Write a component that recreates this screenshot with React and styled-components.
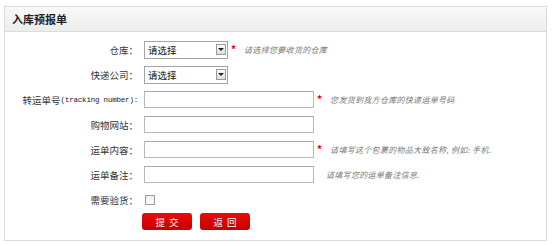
import styled, { createGlobalStyle } from 'styled-components'

const GlobalStyle = createGlobalStyle`
  body {
    margin: 0;
    background: #ffffff;
    font-family: "Noto Sans CJK SC", "Liberation Sans", sans-serif;
    color: #333333;
  }
`

const Panel = styled.div`
  margin: 6px 5px 0 4px;
  width: 543px;
  height: 235px;
  border: 1px solid #dcdcdc;
  box-sizing: border-box;
  background: #ffffff;
`
const PanelHeader = styled.div`
  height: 24px;
  display: flex;
  align-items: center;
  padding-left: 7px;
  background: linear-gradient(#f9f9f9, #ececec);
  border-bottom: 1px solid #dcdcdc;
  font-size: 11px;
  font-weight: bold;
  color: #222222;
`
const Form = styled.div`
  display: grid;
  grid-template-columns: 133px 1fr;
  grid-auto-rows: 25px;
  column-gap: 6px;
  padding-top: 5px;
`
const Label = styled.div`
  display: flex;
  align-items: center;
  justify-content: flex-end;
  font-size: 9.5px;
  color: #333333;
  white-space: nowrap;
`
const Mono = styled.span`
  font-family: "Liberation Mono", monospace;
  font-size: 7.5px;
  letter-spacing: -0.2px;
  color: #222222;
`
const Field = styled.div`
  display: flex;
  align-items: center;
`
const Select = styled.div`
  width: 84px;
  height: 18px;
  box-sizing: border-box;
  border: 1px solid #a5a5a5;
  display: flex;
  align-items: center;
  justify-content: space-between;
  padding: 0 1px 0 3px;
  font-size: 9.5px;
  color: #111111;
  background: #ffffff;
`
const Arrow = styled.span`
  width: 10px;
  height: 11px;
  box-sizing: border-box;
  border: 1px solid #9a9a9a;
  background: linear-gradient(#fafafa, #dedede);
  display: flex;
  align-items: center;
  justify-content: center;
  &::after {
    content: '';
    border-left: 3px solid transparent;
    border-right: 3px solid transparent;
    border-top: 3px solid #222222;
  }
`
const Input = styled.div`
  width: 170px;
  height: 17px;
  box-sizing: border-box;
  border: 1px solid #b8b8b8;
  border-top-color: #a8a8a8;
  background: #ffffff;
`
const Star = styled.span`
  color: #e00000;
  font-size: 10px;
  font-weight: bold;
  margin-left: 3px;
  line-height: 1;
  transform: translateY(-1px);
`
const Hint = styled.span`
  font-size: 8px;
  font-style: italic;
  color: #7a7a7a;
  margin-left: ${({ $gap }) => $gap}px;
  letter-spacing: 0.3px;
`
const Check = styled.span`
  width: 10px;
  height: 10px;
  box-sizing: border-box;
  border: 1px solid #9c9c9c;
  background: linear-gradient(#ececec, #ffffff);
  margin-left: 1px;
`
const Buttons = styled.div`
  display: flex;
  gap: 8px;
  align-items: flex-start;
  padding-top: 1px;
  margin-left: -2px;
`
const Button = styled.div`
  width: 50px;
  height: 17px;
  border-radius: 3px;
  background: linear-gradient(#e80b0b, #c40000);
  color: #ffffff;
  font-size: 9.5px;
  letter-spacing: 4px;
  text-indent: 4px;
  display: flex;
  align-items: center;
  justify-content: center;
`

const rows = [
  { label: '仓库：', kind: 'select', star: true, hint: '请选择您要收货的仓库' },
  { label: '快递公司：', kind: 'select' },
  {
    label: (
      <>
        转运单号<Mono>(tracking number):</Mono>
      </>
    ),
    kind: 'input',
    star: true,
    hint: '您发货到我方仓库的快递运单号码',
  },
  { label: '购物网站：', kind: 'input' },
  { label: '运单内容：', kind: 'input', star: true, hint: '请填写这个包裹的物品大致名称, 例如: 手机.' },
  { label: '运单备注：', kind: 'input', hint: '请填写您的运单备注信息.' },
  { label: '需要验货：', kind: 'check' },
]

function App() {
  return (
    <>
      <GlobalStyle />
      <Panel>
        <PanelHeader>入库预报单</PanelHeader>
        <Form>
          {rows.map((row, index) => (
            <Row key={`row-${index}`} row={row} />
          ))}
          <div />
          <Buttons>
            <Button>提交</Button>
            <Button>返回</Button>
          </Buttons>
        </Form>
      </Panel>
    </>
  )
}

function Row({ row }) {
  return (
    <>
      <Label>{row.label}</Label>
      <Field>
        {row.kind === 'select' && (
          <Select>
            请选择
            <Arrow />
          </Select>
        )}
        {row.kind === 'input' && <Input />}
        {row.kind === 'check' && <Check />}
        {row.star && <Star>*</Star>}
        {row.hint && <Hint $gap={row.star ? 8 : 12}>{row.hint}</Hint>}
      </Field>
    </>
  )
}

export default App
